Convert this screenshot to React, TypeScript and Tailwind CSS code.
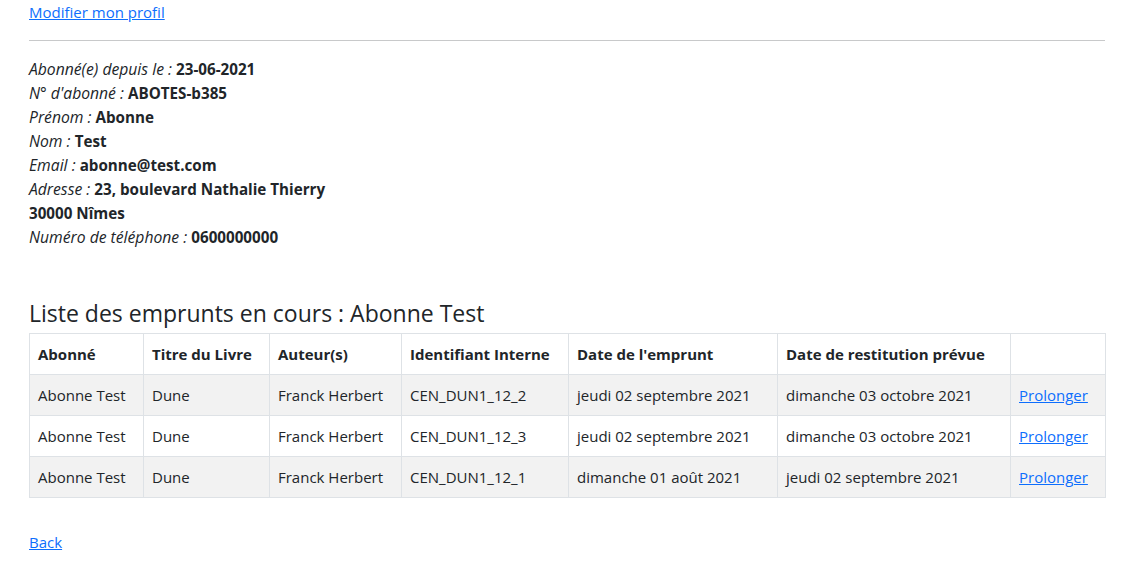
import React from "react";

const rows = [
  ["Abonne Test", "Dune", "Franck Herbert", "CEN_DUN1_12_2", "jeudi 02 septembre 2021", "dimanche 03 octobre 2021"],
  ["Abonne Test", "Dune", "Franck Herbert", "CEN_DUN1_12_3", "jeudi 02 septembre 2021", "dimanche 03 octobre 2021"],
  ["Abonne Test", "Dune", "Franck Herbert", "CEN_DUN1_12_1", "dimanche 01 août 2021", "jeudi 02 septembre 2021"],
];

const heads = ["Abonné", "Titre du Livre", "Auteur(s)", "Identifiant Interne", "Date de l'emprunt", "Date de restitution prévue", ""];
const widths = ["w-[114px]", "w-[126px]", "w-[132px]", "w-[167px]", "w-[209px]", "w-[233px]", "w-[95px]"];

function Info({ label, value }: { label: string; value: string }) {
  return (
    <div className="h-6 leading-6">
      <i className="text-[15.7px]">{label} : </i>
      <b className="font-bold text-[15.2px]">{value}</b>
    </div>
  );
}

export default function App() {
  return (
    <div
      className="bg-white text-[#212529] text-[15px] leading-6 px-[29px] min-h-[565px]"
      style={{ fontFamily: "'Segoe UI', 'Open Sans', 'Noto Sans', sans-serif" }}
    >
      <div className="w-[1076px]">
        <a href="#" className="text-[#0d6efd] underline">Modifier mon profil</a>
        <hr className="my-4 border-t border-[#c8c9ca]" />
        <div>
          <Info label="Abonné(e) depuis le" value="23-06-2021" />
          <Info label="N° d'abonné" value="ABOTES-b385" />
          <Info label="Prénom" value="Abonne" />
          <Info label="Nom" value="Test" />
          <Info label="Email" value="abonne@test.com" />
          <Info label="Adresse" value="23, boulevard Nathalie Thierry" />
          <div className="h-6 font-bold text-[15.2px]">30000 Nîmes</div>
          <Info label="Numéro de téléphone" value="0600000000" />
        </div>
        <h4 className="mt-[50px] text-[23px] leading-[28px] font-medium mb-[6px]">Liste des emprunts en cours : Abonne Test</h4>
        <table className="w-[1076px] table-fixed border-collapse border border-[#dee2e6]">
          <thead>
            <tr>
              {heads.map((h, i) => (
                <th key={i} className={`${widths[i]} border border-[#dee2e6] px-2 py-2 text-left font-bold h-[41px]`}>{h}</th>
              ))}
            </tr>
          </thead>
          <tbody>
            {rows.map((r, ri) => (
              <tr key={ri} className={ri % 2 === 0 ? "bg-[#f2f2f2]" : "bg-white"}>
                {r.map((c, ci) => (
                  <td key={ci} className="border border-[#dee2e6] px-2 py-2 h-[41px]">{c}</td>
                ))}
                <td className="border border-[#dee2e6] px-2 py-2 h-[41px]">
                  <a href="#" className="text-[#0d6efd] underline">Prolonger</a>
                </td>
              </tr>
            ))}
          </tbody>
        </table>
        <div className="mt-[32px]">
          <a href="#" className="text-[#0d6efd] underline">Back</a>
        </div>
      </div>
    </div>
  );
}
